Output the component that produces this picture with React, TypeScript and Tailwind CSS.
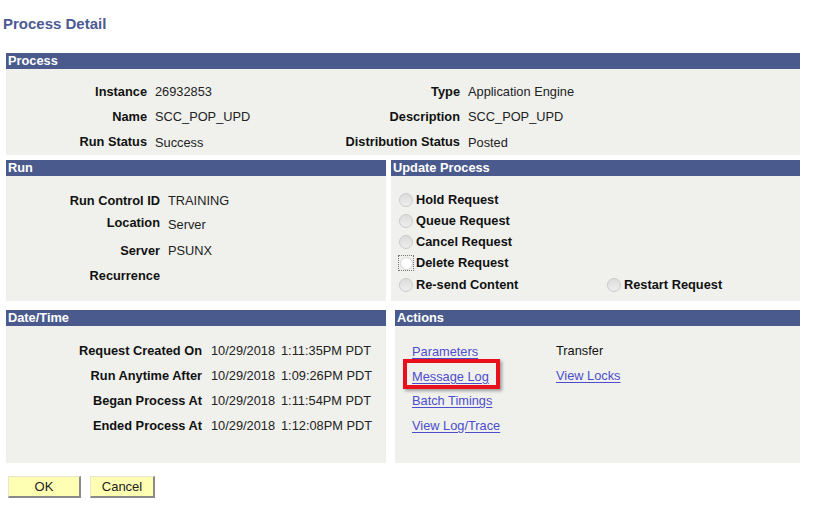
import React from 'react';

const font = { fontFamily: '"Liberation Sans", Arial, sans-serif' };

function Header({ title }: { title: string }) {
  return (
    <div className="h-[16px] bg-[#4a5a8c] pl-[2px] text-[12.8px] font-bold leading-[16px] text-white">
      {title}
    </div>
  );
}

function Radio({ label, focus }: { label: string; focus?: boolean }) {
  return (
    <div className="flex items-center">
      {focus ? (
        <span className="flex h-[14px] w-[14px] items-center justify-center outline-1 outline-dotted outline-[#777]">
          <span className="h-[13px] w-[13px] rounded-full border border-[#d4d4d4] bg-white" />
        </span>
      ) : (
        <span className="h-[14px] w-[14px] rounded-full border border-[#c9c9c9] bg-gradient-to-b from-[#dcdcdc] to-[#eeeeee]" />
      )}
      <span className="ml-[3px] text-[12.8px] font-bold text-[#111]">{label}</span>
    </div>
  );
}

function LinkText({ children }: { children: React.ReactNode }) {
  return <span className="text-[12.8px] text-[#4d4dcc] underline underline-offset-2">{children}</span>;
}

export default function App() {
  const dates = [
    ['Request Created On', '1:11:35PM PDT'],
    ['Run Anytime After', '1:09:26PM PDT'],
    ['Began Process At', '1:11:54PM PDT'],
    ['Ended Process At', '1:12:08PM PDT'],
  ];

  return (
    <div className="h-[514px] w-[819px] bg-white text-[#222]" style={font}>
      {/* 제목 */}
      <div className="pl-[3px] pt-[15px] text-[15px] font-bold leading-[18px] text-[#4c5a92]">Process Detail</div>

      <div className="ml-[6px] mt-[20px] w-[794px]">
        {/* Process */}
        <Header title="Process" />
        <div className="h-[86px] bg-[#f0f1ed] pt-[11px] text-[12.8px]">
          {[
            ['Instance', '26932853', 'Type', 'Application Engine'],
            ['Name', 'SCC_POP_UPD', 'Description', 'SCC_POP_UPD'],
            ['Run Status', 'Success', 'Distribution Status', 'Posted'],
          ].map(([l1, v1, l2, v2], i) => (
            <div key={l1} className={`flex items-center ${i === 0 ? 'h-[24px]' : i === 1 ? 'h-[26px]' : 'h-[24px]'}`}>
              <span className="w-[141px] text-right font-bold text-[#111]">{l1}</span>
              <span className={`ml-[8px] w-[167px] text-[#222] ${i === 2 ? 'pt-[2px]' : ''}`}>{v1}</span>
              <span className="w-[138px] text-right font-bold text-[#111]">{l2}</span>
              <span className={`ml-[8px] text-[#222] ${i === 2 ? 'pt-[2px]' : ''}`}>{v2}</span>
            </div>
          ))}
        </div>

        {/* Run / Update Process */}
        <div className="mt-[5px] flex">
          <div className="w-[380px]">
            <Header title="Run" />
            <div className="h-[125px] bg-[#f0f1ed] pt-[13px] text-[12.8px]">
              {[
                ['Run Control ID', 'TRAINING', 'h-[23px]'],
                ['Location', 'Server', 'h-[25px]'],
                ['Server', 'PSUNX', 'h-[27px]'],
                ['Recurrence', '', 'h-[24px]'],
              ].map(([l, v, h], i) => (
                <div key={l} className={`flex items-center ${h}`}>
                  <span className={`w-[154px] text-right font-bold text-[#111] ${i === 1 ? '-mt-[3px]' : ''}`}>{l}</span>
                  <span className="ml-[8px] text-[#222]">{v}</span>
                </div>
              ))}
            </div>
          </div>
          <div className="ml-[5px] w-[409px]">
            <Header title="Update Process" />
            <div className="h-[125px] bg-[#f0f1ed] pl-[8px] pt-[13px]">
              <div className="flex h-[21px] items-center"><Radio label="Hold Request" /></div>
              <div className="flex h-[21px] items-center"><Radio label="Queue Request" /></div>
              <div className="flex h-[21px] items-center"><Radio label="Cancel Request" /></div>
              <div className="flex h-[22px] items-center"><Radio label="Delete Request" focus /></div>
              <div className="flex h-[21px] items-center">
                <div className="w-[208px]"><Radio label="Re-send Content" /></div>
                <Radio label="Restart Request" />
              </div>
            </div>
          </div>
        </div>

        {/* Date/Time / Actions */}
        <div className="mt-[9px] flex">
          <div className="w-[380px]">
            <Header title="Date/Time" />
            <div className="h-[137px] bg-[#f0f1ed] pt-[12px] text-[12.8px]">
              {dates.map(([l, t]) => (
                <div key={l} className="flex h-[25px] items-center">
                  <span className="w-[196px] text-right font-bold text-[#111]">{l}</span>
                  <span className="ml-[9px] w-[70px] text-[#222]">10/29/2018</span>
                  <span className="text-[#222]">{t}</span>
                </div>
              ))}
            </div>
          </div>
          <div className="ml-[9px] w-[405px]">
            <Header title="Actions" />
            <div className="h-[137px] bg-[#f0f1ed] pl-[17px] pt-[12px]">
              <div className="flex h-[25px] items-center">
                <div className="w-[144px]"><LinkText>Parameters</LinkText></div>
                <span className="text-[12.8px] text-[#111]">Transfer</span>
              </div>
              <div className="flex h-[25px] items-center">
                <div className="w-[144px]">
                  <span className="relative">
                    <LinkText>Message Log</LinkText>
                    {/* 강조 박스 */}
                    <span className="pointer-events-none absolute -bottom-[5px] -left-[9px] -right-[11px] -top-[8px] border-[4px] border-[#e8101c] shadow-[2px_2px_3px_rgba(0,0,0,0.35)]" />
                  </span>
                </div>
                <LinkText>View Locks</LinkText>
              </div>
              <div className="flex h-[25px] items-center"><LinkText>Batch Timings</LinkText></div>
              <div className="flex h-[25px] items-center"><LinkText>View Log/Trace</LinkText></div>
            </div>
          </div>
        </div>

        {/* 버튼 */}
        <div className="mt-[13px] flex gap-[9px] pl-[2px]">
          <button className="h-[22px] w-[73px] border-b-2 border-r-2 border-l border-t border-b-[#8a8a8a] border-r-[#8a8a8a] border-l-[#e6e6c8] border-t-[#e6e6c8] bg-[#ffffb4] text-[13px] text-[#222]">
            OK
          </button>
          <button className="h-[22px] w-[65px] border-b-2 border-r-2 border-l border-t border-b-[#8a8a8a] border-r-[#8a8a8a] border-l-[#e6e6c8] border-t-[#e6e6c8] bg-[#ffffb4] text-[13px] text-[#222]">
            Cancel
          </button>
        </div>
      </div>
    </div>
  );
}
